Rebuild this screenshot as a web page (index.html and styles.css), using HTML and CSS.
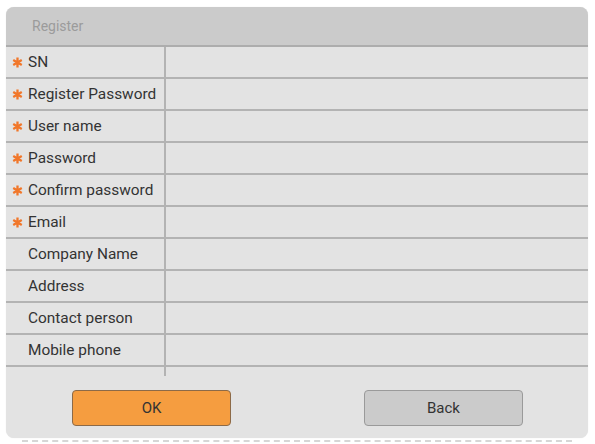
FILE: index.html
```html
<!DOCTYPE html>
<html lang="en">
<head>
    <meta charset="UTF-8" />
    <meta name="viewport" content="width=device-width, initial-scale=1.0" />
    <title>Register</title>
    <link rel="stylesheet" href="styles.css">
</head>

<body>
    <div class="panel">
        <div class="panel-header">Register</div>

        <div class="form-rows">
            <div class="row"><div class="label"><span class="req"><svg viewBox="0 0 10 10"><path d="M5 0.5V9.5M1.1 2.75L8.9 7.25M1.1 7.25L8.9 2.75" /></svg></span>SN</div><div class="field"></div></div>
            <div class="row"><div class="label"><span class="req"><svg viewBox="0 0 10 10"><path d="M5 0.5V9.5M1.1 2.75L8.9 7.25M1.1 7.25L8.9 2.75" /></svg></span>Register Password</div><div class="field"></div></div>
            <div class="row"><div class="label"><span class="req"><svg viewBox="0 0 10 10"><path d="M5 0.5V9.5M1.1 2.75L8.9 7.25M1.1 7.25L8.9 2.75" /></svg></span>User name</div><div class="field"></div></div>
            <div class="row"><div class="label"><span class="req"><svg viewBox="0 0 10 10"><path d="M5 0.5V9.5M1.1 2.75L8.9 7.25M1.1 7.25L8.9 2.75" /></svg></span>Password</div><div class="field"></div></div>
            <div class="row"><div class="label"><span class="req"><svg viewBox="0 0 10 10"><path d="M5 0.5V9.5M1.1 2.75L8.9 7.25M1.1 7.25L8.9 2.75" /></svg></span>Confirm password</div><div class="field"></div></div>
            <div class="row"><div class="label"><span class="req"><svg viewBox="0 0 10 10"><path d="M5 0.5V9.5M1.1 2.75L8.9 7.25M1.1 7.25L8.9 2.75" /></svg></span>Email</div><div class="field"></div></div>
            <div class="row"><div class="label"><span class="req"></span>Company Name</div><div class="field"></div></div>
            <div class="row"><div class="label"><span class="req"></span>Address</div><div class="field"></div></div>
            <div class="row"><div class="label"><span class="req"></span>Contact person</div><div class="field"></div></div>
            <div class="row"><div class="label"><span class="req"></span>Mobile phone</div><div class="field"></div></div>
            <div class="row tail"><div class="label"></div><div class="field"></div></div>
        </div>

        <div class="actions">
            <button class="btn btn-ok">OK</button>
            <button class="btn btn-back">Back</button>
        </div>
    </div>
    <div class="edge"></div>
</body>
</html>
```

FILE: styles.css
```css
body {
    margin: 0;
    padding: 7px 7px 0 6px;
    background: #ffffff;
    font-family: Roboto, 'Liberation Sans', Arial, sans-serif;
}

.panel {
    height: 431px;
    background: #e3e3e3;
    border-radius: 8px;
    overflow: hidden;
    box-shadow: 0 0 1px rgba(0, 0, 0, 0.12);
}

.panel-header {
    height: 38px;
    line-height: 38px;
    padding-left: 26px;
    background: #cbcbcb;
    color: #9b9b9b;
    font-size: 14px;
    border-bottom: 2px solid #adadad;
}

.row {
    display: grid;
    grid-template-columns: 160px 1fr;
    height: 30px;
    border-bottom: 2px solid #b3b3b3;
}

    .row.tail {
        height: 9px;
        border-bottom: none;
    }

.label {
    display: flex;
    align-items: center;
    font-size: 15.4px;
    color: #333333;
    border-right: 2px solid #b3b3b3;
}

.req {
    width: 21px;
    display: flex;
    justify-content: center;
    padding-left: 1px;
}

    .req svg {
        width: 11px;
        height: 11px;
        stroke: #f1772a;
        stroke-width: 2.1;
        fill: none;
    }

.actions {
    display: flex;
    padding: 14px 0 0 66px;
    gap: 133px;
}

.btn {
    width: 159px;
    height: 36px;
    border-radius: 4px;
    font-family: Roboto, 'Liberation Sans', Arial, sans-serif;
    font-size: 15px;
    color: #333333;
    cursor: pointer;
}

.btn-ok {
    background: #f59d40;
    border: 1px solid #8c6a48;
}

.btn-back {
    background: #cbcbcb;
    border: 1px solid #9a9a9a;
}

.edge {
    margin: 2px 16px 0 16px;
    border-top: 2px dashed #d6d6d6;
}
```
